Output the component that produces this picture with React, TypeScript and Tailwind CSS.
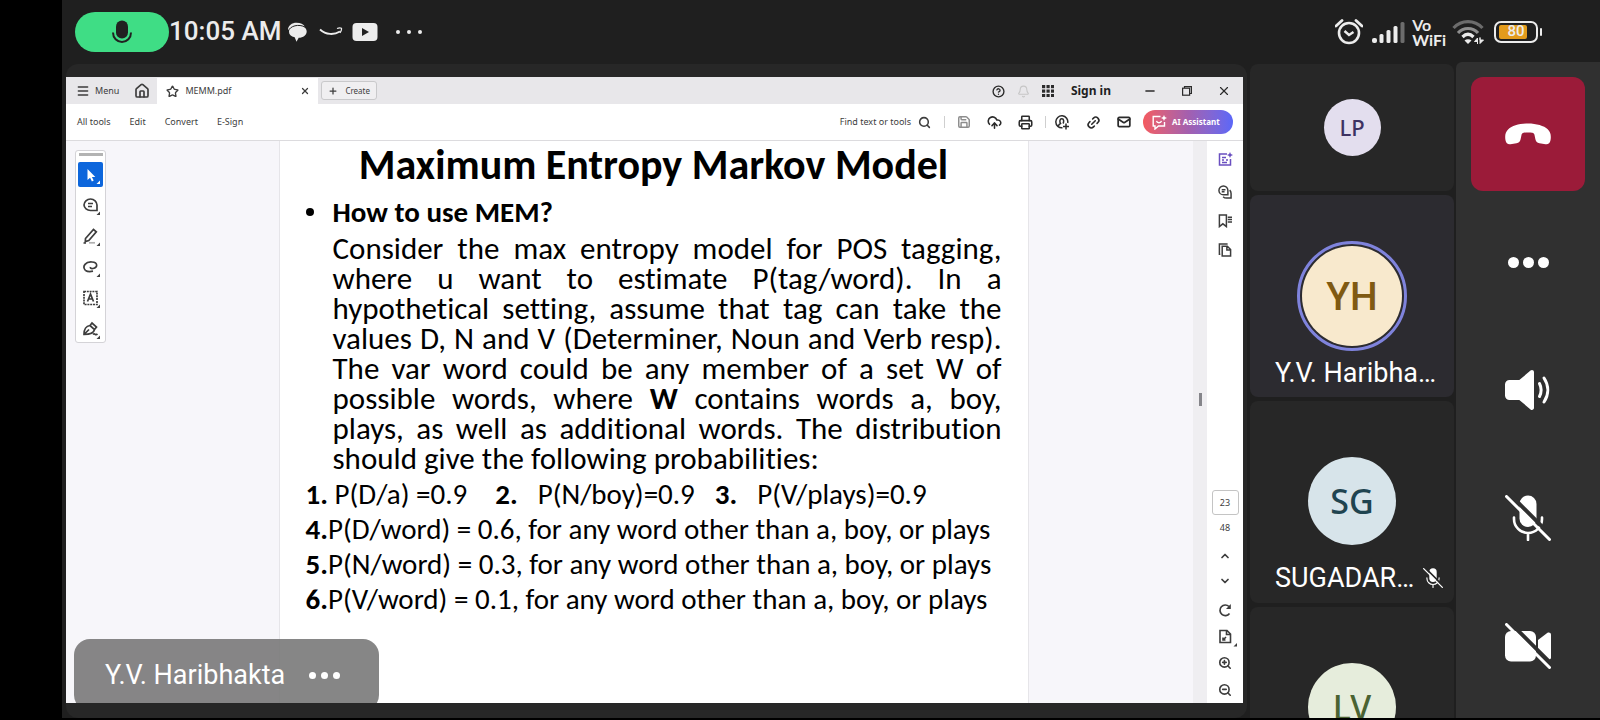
import type { ReactNode } from "react";
import {
  Bell, ChevronDown, ChevronUp, CircleHelp, CloudUpload, House, Link2, Mail,
  Menu, Minus, Plus, Printer, Save, Search, Star, X, ZoomIn, ZoomOut,
} from "lucide-react";

function MicOff({ className, gap }: { className: string; gap: string }) {
  return (
    <svg viewBox="0 0 46 46" className={className} fill="none" aria-hidden="true">
      <rect x="14.5" y="0.5" width="17" height="31.5" rx="8.5" fill="currentColor" />
      <path d="M9 22.500v1.500a14 14 0 0 0 28 0v-1.500M23 38v7" stroke="currentColor" strokeWidth="2.600" strokeLinecap="round" />
      <path d="M4 -1.500L48 42.500" stroke={gap} strokeWidth="4" />
      <path d="M1.500 1.500L44.500 44.500" stroke="currentColor" strokeWidth="3" strokeLinecap="round" />
    </svg>
  );
}

function CameraOff() {
  return (
    <svg viewBox="0 0 46 46" className="size-[46px]" fill="none" aria-hidden="true">
      <rect x="0" y="8" width="31" height="30.500" rx="6" fill="currentColor" />
      <path d="M33 17l9.500-7.200c1.500-1 3.500 0 3.500 1.800v22.800c0 1.800-2 2.800-3.500 1.800L33 29z" fill="currentColor" />
      <path d="M4 -1.500L50 44.500" stroke="#303030" strokeWidth="4" />
      <path d="M1.500 1.500L44.500 44.500" stroke="currentColor" strokeWidth="3" strokeLinecap="round" />
    </svg>
  );
}

function Speaker() {
  return (
    <svg viewBox="0 0 46 46" className="size-[46px]" fill="none" aria-hidden="true">
      <path d="M4.500 13h9.800L25.500 3.600c1.500-1.200 3.500-.3 3.500 1.600v35.600c0 1.900-2 2.800-3.500 1.600L14.300 33H4.500A4.500 4.500 0 0 1 0 28.500v-11A4.500 4.500 0 0 1 4.500 13z" fill="currentColor" />
      <path d="M34.500 16.500c2 4 2 9 0 13M39 11c5 7.500 5 16.500 0 24" stroke="currentColor" strokeWidth="3" strokeLinecap="round" />
    </svg>
  );
}

function HangUp() {
  return (
    <svg viewBox="0 0 46 22" className="h-[22px] w-[46px]" fill="currentColor" aria-hidden="true">
      <path d="M23 .5c8.500 0 16 2.200 19.700 5.800 3 2.900 3.600 6.500 2.800 11-.5 3-2.400 4.300-5 3.900l-6-.9c-2.400-.4-3.600-1.800-4.100-4l-.9-4.300c-.3-1.300-1-2-2.200-2.200-2.800-.5-5.800-.5-8.600 0-1.200.2-1.900.9-2.200 2.200l-.9 4.300c-.5 2.200-1.700 3.600-4.100 4l-6 .9c-2.600.4-4.500-.9-5-3.900-.8-4.500-.2-8.100 2.800-11C7 2.700 14.500.5 23 .5z" />
    </svg>
  );
}

function Dots({ className, r, step }: { className: string; r: number; step: number }) {
  const w = step * 2 + r * 2;
  return (
    <svg viewBox={`0 0 ${w} ${r * 2}`} className={className} fill="currentColor" aria-hidden="true">
      {[0, 1, 2].map((i) => <circle key={i} cx={r + i * step} cy={r} r={r} />)}
    </svg>
  );
}

function StatusBar() {
  return (
    <header className="flex h-[62px] shrink-0 items-center pl-[13px] pr-[58px] pt-px text-[#ececec]">
      <div className="flex h-10 w-[94px] items-center justify-center rounded-full bg-[#3fdd85]">
        <svg viewBox="0 0 20 24" className="h-6 w-5" fill="none" aria-hidden="true">
          <rect x="4" y="0.500" width="12" height="18" rx="6" fill="#212121" />
          <path d="M1 12.500c0 5.500 4 9.500 9 9.500s9-4 9-9.500" stroke="#212121" strokeWidth="2" />
        </svg>
      </div>
      <time className="font-['Roboto',sans-serif] text-[26px] font-medium">10:05 AM</time>
      <svg viewBox="0 0 20 20" className="ml-[6px] size-5" aria-hidden="true">
        <path d="M1 8C1 3.500 5 .8 9.500.8c4 0 7 1.500 8.500 4C14 2.800 5 3 1.500 9z" fill="#ececec" />
        <path d="M11 3.200c5 0 8.700 2.500 8.700 6.300 0 3.500-3.500 6.300-8 6.300l-2.200 4-1.800-4.500C4 14.500 2 12.500 2 9.800 2 5.800 6 3.200 11 3.200z" fill="#ececec" />
        <path d="M1 9.500C3 3.500 12 1.800 18 5" stroke="#212121" strokeWidth="1" fill="none" />
      </svg>
      <svg viewBox="0 0 24 10" className="ml-3 h-[10px] w-6" fill="none" stroke="#ececec" aria-hidden="true">
        <path d="M1 2.500c6 5.500 14 5.500 20 2" strokeWidth="2" />
        <path d="M18 1.500c2-.8 3.500-.8 4.500-.2.300 1.500-.3 3-1.500 4.500" strokeWidth="1.200" />
      </svg>
      <svg viewBox="0 0 26 20" className="ml-[9px] h-5 w-[26px]" aria-hidden="true">
        <rect x="0.500" y="1" width="25" height="18" rx="4" fill="#ececec" />
        <path d="M10 6v8l7-4z" fill="#212121" />
      </svg>
      <Dots className="ml-[18px] h-[4px] w-[26px]" r={2} step={11} />

      <svg viewBox="0 0 28 28" className="ml-auto size-7" fill="none" stroke="#ececec" aria-hidden="true">
        <circle cx="14" cy="15" r="10" strokeWidth="2.600" />
        <path d="M9.500 13l4.500 4 4.500-3" strokeWidth="2.400" />
        <path d="M1 8l6-5.500M27 8l-6-5.500" strokeWidth="2.800" strokeLinecap="round" />
      </svg>
      <svg viewBox="0 0 34 22" className="ml-[9px] h-[22px] w-[34px]" fill="#ececec" aria-hidden="true">
        <rect x="0" y="17" width="5" height="5" rx="2" />
        <rect x="7.500" y="13" width="4" height="9" rx="1.500" />
        <rect x="14.500" y="9" width="4" height="13" rx="1.500" />
        <rect x="21.500" y="5" width="4" height="17" rx="1.500" />
        <rect x="28.500" y="1" width="4" height="21" rx="1.500" fill="#6c6c6c" />
      </svg>
      <div className="ml-[6px] font-['Lato',sans-serif] text-[16px] font-bold leading-[15px]">
        <div>Vo</div>
        <div>WiFi</div>
      </div>
      <svg viewBox="0 0 32 26" className="ml-[6px] h-[26px] w-8" fill="none" aria-hidden="true">
        <path d="M1.500 9c8-8.500 21-8.500 29 0" stroke="#6c6c6c" strokeWidth="3.200" />
        <path d="M6 14c5.500-6 14.500-6 20 0" stroke="#8f8f8f" strokeWidth="3.200" />
        <path d="M10.500 18c3.500-3.500 7.500-3.500 11 0" stroke="#ececec" strokeWidth="3.200" />
        <path d="M12.500 21.500c2-1.800 5-1.800 7 0L16 25z" fill="#ececec" />
        <path d="M25.500 25v-6l-3 3.500h3zM28 18.500v6l3.500-3.500H28z" fill="#ececec" stroke="#ececec" />
      </svg>
      <div className="ml-[10px] flex items-center">
        <div className="relative flex h-[22px] w-11 items-center justify-center rounded-[7px] border-2 border-[#ececec]">
          <div className="absolute inset-y-[2px] left-[3px] w-7 rounded-[2px] bg-[#e39b1c]" />
          <span className="relative font-['Roboto',sans-serif] text-[15px] font-medium leading-none">80</span>
        </div>
        <div className="ml-[2px] h-2 w-[2px] rounded-full bg-[#ececec]" />
      </div>
    </header>
  );
}

function TabBar() {
  return (
    <div className="flex h-[27px] items-stretch bg-[#e8e7ea] pt-px text-[10px] text-[#3d3d3d]">
      <button className="flex items-center gap-[5px] pl-[10px]">
        <Menu className="size-[14px]" strokeWidth={2.500} />
        <span className="text-[9px]">Menu</span>
      </button>
      <button aria-label="Home" className="ml-[15px] mr-[7px] flex items-center"><House className="size-4" strokeWidth={2.500} /></button>
      <div className="flex w-[161px] items-center bg-white pl-[9px] pr-2">
        <Star className="size-[13px]" strokeWidth={2.500} />
        <span className="ml-[6px] text-[9px]">MEMM.pdf</span>
        <button aria-label="Close tab" className="ml-auto"><X className="size-[10px]" strokeWidth={3} /></button>
      </div>
      <button className="mb-1 mt-[3px] ml-[3px] flex items-center gap-[7px] rounded-[3px] border border-[#c9c9cb] bg-[#f0eff1] px-[6px] text-[8px]">
        <Plus className="size-[10px]" strokeWidth={3} />
        Create
      </button>
      <div className="ml-auto flex items-center text-[#2b2b2b]">
        <button aria-label="Help"><CircleHelp className="size-[13px]" strokeWidth={2.500} /></button>
        <button aria-label="Notifications" className="ml-3 text-[#c6c6c6]"><Bell className="size-[13px]" /></button>
        <button aria-label="Apps" className="ml-3">
          <svg viewBox="0 0 12 12" className="size-3" fill="currentColor">
            {[0, 4.500, 9].map((y) => [0, 4.500, 9].map((x) => <rect key={`${x}-${y}`} x={x} y={y} width="3.200" height="3.200" />))}
          </svg>
        </button>
        <button className="ml-[17px] text-[12px] font-bold text-[#1f1f1f]">Sign in</button>
        <button aria-label="Minimize" className="ml-8"><Minus className="size-[14px]" strokeWidth={2.500} /></button>
        <button aria-label="Restore" className="ml-[25px]">
          <svg viewBox="0 0 10 10" className="size-[10px]" fill="none" stroke="currentColor" strokeWidth="1.200">
            <rect x="0.600" y="2.200" width="7" height="7" />
            <path d="M2.500 2V.6h6.900v6.900H8" />
          </svg>
        </button>
        <button aria-label="Close" className="ml-[25px] mr-3"><X className="size-[14px]" strokeWidth={2} /></button>
      </div>
    </div>
  );
}

function ToolBar() {
  return (
    <div className="flex h-[37px] items-center border-b border-[#dcdbde] bg-white pl-[11px] pr-[10px] text-[9px] text-[#3d3d3d]">
      <nav className="flex gap-[19px]">
        <button>All tools</button>
        <button>Edit</button>
        <button>Convert</button>
        <button>E-Sign</button>
      </nav>
      <button className="ml-auto flex items-center gap-[7px]">
        Find text or tools
        <Search className="size-[13px]" strokeWidth={2.800} />
      </button>
      <span className="ml-[13px] h-3 w-px bg-[#cfcfcf]" />
      <div className="ml-3 flex gap-4 text-[#2b2b2b]">
        <button aria-label="Save" className="text-[#8d8d8d]"><Save className="size-[14px]" strokeWidth={2.500} /></button>
        <button aria-label="Upload"><CloudUpload className="size-[15px]" strokeWidth={2.500} /></button>
        <button aria-label="Print"><Printer className="size-[15px]" strokeWidth={2.500} /></button>
      </div>
      <span className="ml-3 h-3 w-px bg-[#cfcfcf]" />
      <div className="ml-[9px] flex gap-4 text-[#2b2b2b]">
        <button aria-label="Add people">
          <svg viewBox="0 0 15 15" className="size-[15px]" fill="none" stroke="currentColor" strokeWidth="1.500">
            <path d="M7.500 12.800A6 6 0 1 1 12.700 8" />
            <path d="M3.500 11c.2-1.500 1-2 2-2.500C4.500 7 4.500 3.800 6.800 3.800S9 7 8 8.500M11 8.500v6M8 11.500h6" />
          </svg>
        </button>
        <button aria-label="Link"><Link2 className="size-[15px] -rotate-45" strokeWidth={2.500} /></button>
        <button aria-label="Mail"><Mail className="size-[14px]" strokeWidth={3} /></button>
      </div>
      <button className="ml-3 flex h-6 w-[90px] items-center gap-[5px] rounded-full bg-linear-to-r from-[#f45a5e] via-[#a45fae] to-[#5b67f8] pl-[9px] text-[9px] font-bold text-white">
        <svg viewBox="0 0 15 15" className="size-[15px]" fill="none" stroke="currentColor" strokeWidth="1.400">
          <path d="M8.500 1.500H1.200V11H3v3l3.500-3h6V7" />
          <path d="M4.500 5.800c.6 2.500 4.400 2.500 5 0" />
          <path d="M12 0l.9 2.100L15 3l-2.100.9L12 6l-.9-2.100L9 3l2.100-.9z" fill="currentColor" stroke="none" />
        </svg>
        <span className="text-[8px]">AI Assistant</span>
      </button>
    </div>
  );
}

function Tool({ label, active, children }: { label: string; active?: boolean; children: ReactNode }) {
  return (
    <button
      aria-label={label}
      className={active ? "flex size-[25px] items-center justify-center rounded-[2px] bg-[#0d66dc] text-white" : "flex size-[25px] items-center justify-center text-[#3d3d3d]"}
    >
      <svg viewBox="0 0 20 20" className="size-5" fill="none" stroke="currentColor" strokeWidth="1.700">
        {children}
        <path d="M19 15.500v3.500h-3.500z" fill="currentColor" stroke="none" />
      </svg>
    </button>
  );
}

function QuickTools() {
  return (
    <div className="ml-[9px] mt-[9px] flex w-[31px] flex-col items-center gap-[6px] self-start rounded-[3px] border border-[#d4d3d7] bg-white pt-[2px]">
      <span className="h-[3px] w-6 bg-[#b3b3b3]" />
      <Tool label="Select" active>
        <path d="M6.500 4v11l2.600-2.300 1.800 3.800 1.800-.9-1.800-3.600h3.400z" fill="currentColor" stroke="none" />
      </Tool>
      <Tool label="Comment">
        <path d="M3 9a6.500 6 0 1 1 13 0v5.500H9.500A6.500 5.800 0 0 1 3 9zM7 7.500h5M7 10.500h4" />
      </Tool>
      <Tool label="Highlight">
        <path d="M4.500 11.500L12.500 2.500l2.800 2.300-7.500 8.800-3.500 1zM2.500 16h2.500" />
        <path d="M8 15.800h6" stroke="#b0b0b0" />
      </Tool>
      <Tool label="Draw">
        <path d="M4.500 12.500C.5 8 5 3.500 11 4c6 .4 6 5.500 1 6.500-2 .4-3-.4-2.500-1.500M4.500 12.500c2 1.200 5 1.200 7.500.7" />
      </Tool>
      <Tool label="Add text">
        <rect x="3" y="2.500" width="13" height="13" strokeDasharray="2 0.800" />
        <path d="M6.500 12.500l3-7.500 3 7.500M7.500 10h4" />
      </Tool>
      <Tool label="Sign">
        <path d="M3 14.500c0-5 2-8.500 6-9l4.500 4c-.6 3-4 5-10.500 5zM9 5.500l2-2.500 4.500 4-2 2.500M3.500 14l4.500-4.500M12 14.500c2-2 2 1.500 4.500-.5" />
      </Tool>
    </div>
  );
}

const paragraph = [
  "Consider the max entropy model for POS tagging,",
  "where u want to estimate P(tag/word). In a",
  "hypothetical setting, assume that tag can take the",
  "values D, N and V (Determiner, Noun and Verb resp).",
  "The var word could be any member of a set W of",
  "possible words, where W contains words a, boy,",
  "plays, as well as additional words. The distribution",
];

const rules = [
  ["4.", "P(D/word) = 0.6, for any word other than a, boy, or plays"],
  ["5.", "P(N/word) = 0.3, for any word other than a, boy, or plays"],
  ["6.", "P(V/word) = 0.1, for any word other than a, boy, or plays"],
];

function ParagraphLine({ text }: { text: string }) {
  const [before, after] = text.split("where W contains");
  return (
    <span className="block whitespace-nowrap [text-align-last:justify]">
      {after === undefined ? text : <>{before}where <b>W</b> contains{after}</>}
    </span>
  );
}

function Slide() {
  return (
    <article className="w-[750px] shrink-0 border-x border-[#e6e5e9] bg-white pl-[26px] pr-[26px] font-['Carlito','Lato',sans-serif] text-black [font-variant-ligatures:none]">
      <h1 className="whitespace-nowrap text-center text-[42px] font-bold leading-[48px]">Maximum Entropy Markov Model</h1>
      <div className="mt-[5px] flex items-center text-[29px] leading-[36px]">
        <span className="mr-[19px] size-2 rounded-full bg-black" />
        <h2 className="font-bold">How to use MEM?</h2>
      </div>
      <p className="ml-[27px] mt-[3px] text-[31px] leading-[30px]">
        {paragraph.map((line) => <ParagraphLine key={line} text={line} />)}
        <span className="block">should give the following probabilities:</span>
      </p>
      <ul className="mt-1 whitespace-nowrap text-[29px] leading-[35px]">
        <li className="flex">
          <span><b>1.</b> P(D/a) =0.9</span>
          <span className="ml-7 flex gap-5"><b>2.</b> P(N/boy)=0.9</span>
          <span className="ml-5 flex gap-5"><b>3.</b> P(V/plays)=0.9</span>
        </li>
        {rules.map(([n, text]) => <li key={n}><b>{n}</b>{text}</li>)}
      </ul>
    </article>
  );
}

function RightRail() {
  return (
    <div className="flex w-9 shrink-0 flex-col items-center justify-between bg-white pb-[6px] pt-[11px] text-[9px] text-[#3d3d3d]">
      <div className="flex flex-col items-center gap-[15px]">
        <button aria-label="AI panel" className="mb-[3px] text-[#6a4fc0]">
          <svg viewBox="0 0 15 15" className="size-[15px]" fill="none" stroke="currentColor" strokeWidth="1.500">
            <path d="M9 2H1.500v11h11V7M4 5.500h4M4 8h2M8 8h2M4 10.500h5" />
            <path d="M12 0l.9 2.100L15 3l-2.100.9L12 6l-.9-2.100L9 3l2.100-.9z" fill="currentColor" stroke="none" />
          </svg>
        </button>
        <button aria-label="Comments">
          <svg viewBox="0 0 15 15" className="size-[14px]" fill="none" stroke="currentColor" strokeWidth="1.600">
            <path d="M1 5.800a4.800 4.800 0 1 1 9.600 0v4.700H5.800A4.800 4.800 0 0 1 1 5.800zM4 5h4M4 7.300h3M12.500 5.500c1 1 1.500 2 1.500 3.500v5H9c-1.500 0-2.500-.5-3.500-1.500" />
          </svg>
        </button>
        <button aria-label="Bookmarks">
          <svg viewBox="0 0 15 15" className="size-[14px]" fill="none" stroke="currentColor" strokeWidth="1.600">
            <path d="M1.500 1h7.500v12.500L5.200 10.500l-3.700 3zM10.500 3.500H15M10.500 6H15M10.500 8.500H15" />
          </svg>
        </button>
        <button aria-label="Pages">
          <svg viewBox="0 0 15 15" className="size-[14px]" fill="none" stroke="currentColor" strokeWidth="1.600">
            <path d="M4.500 3.500h5.500l3.500 3.500v7h-9zM9.500 3.500V7.500h4M2.500 12H1.500V1h8v1" />
          </svg>
        </button>
      </div>
      <div className="flex flex-col items-center">
        <input aria-label="Page number" defaultValue="23" className="h-[25px] w-[27px] rounded-[3px] border border-[#c4c4c4] bg-white text-center" />
        <span className="mt-[7px] leading-3">48</span>
        <button aria-label="Previous page" className="mt-4"><ChevronUp className="size-3" strokeWidth={3.500} /></button>
        <button aria-label="Next page" className="mt-[13px]"><ChevronDown className="size-3" strokeWidth={3.500} /></button>
        <button aria-label="Rotate" className="mt-4">
          <svg viewBox="0 0 14 14" className="size-[14px]" fill="none" stroke="currentColor" strokeWidth="1.700">
            <path d="M11.500 10.500A5.300 5.300 0 1 1 11 3.500" />
            <path d="M12.800 1v5H8z" fill="currentColor" stroke="none" />
          </svg>
        </button>
        <button aria-label="Page display" className="ml-2 mt-3">
          <svg viewBox="0 0 20 18" className="h-[18px] w-5" fill="none" stroke="currentColor" strokeWidth="1.600">
            <path d="M1 1.500h7l3.500 3.500v8.500H1zM7.500 1.500V5.500h4M4 11l3-3M4 8.500V11h2.500" />
            <path d="M18 14v3.500h-3.500z" fill="currentColor" stroke="none" />
          </svg>
        </button>
        <button aria-label="Zoom in" className="mt-[9px]"><ZoomIn className="size-[14px]" strokeWidth={2.800} /></button>
        <button aria-label="Zoom out" className="mt-[13px]"><ZoomOut className="size-[14px]" strokeWidth={2.800} /></button>
      </div>
    </div>
  );
}

function SharedScreen() {
  return (
    <section className="relative flex min-w-0 flex-1 flex-col overflow-hidden bg-[#f7f6fa] font-['Noto_Sans',sans-serif]">
      <TabBar />
      <ToolBar />
      <div className="flex min-h-0 flex-1">
        <div className="flex min-w-0 flex-1">
          <QuickTools />
          <div className="flex min-w-0 flex-1 justify-center pl-[123px] pr-[115px]">
            <Slide />
          </div>
        </div>
        <div className="flex w-[14px] shrink-0 justify-center bg-[#efeef1] pt-[252px]">
          <span className="h-[13px] w-[3px] bg-[#85858a]" />
        </div>
        <RightRail />
      </div>
      <div className="absolute -bottom-2 left-2 flex h-[72px] w-[305px] items-center rounded-2xl bg-[#797979]/90 pl-[31px] font-['Roboto',sans-serif] text-[27px] text-white">
        <span>Y.V. Haribhakta</span>
        <button aria-label="More options" className="ml-auto mr-[39px]"><Dots className="h-[7px] w-[31px]" r={3.5} step={12} /></button>
      </div>
    </section>
  );
}

function Avatar({ initials, className }: { initials: string; className: string }) {
  return <div className={`flex shrink-0 items-center justify-center rounded-full ${className}`}>{initials}</div>;
}

function Participants() {
  return (
    <section className="mt-[2px] flex w-[204px] shrink-0 flex-col gap-1 overflow-hidden font-['Roboto',sans-serif] text-white">
      <div className="flex h-[127px] shrink-0 items-center justify-center rounded-lg bg-[#272727]">
        <Avatar initials="LP" className="size-[57px] bg-[#e3deee] font-['Noto_Sans',sans-serif] text-[22px] font-medium text-[#3d3262]" />
      </div>
      <div className="flex h-[202px] shrink-0 flex-col items-center rounded-lg bg-[#2c2b30] pt-[46px]">
        <div className="rounded-full border-[3px] border-[#7f83dc] p-[2px]">
          <Avatar initials="YH" className="size-[100px] bg-[#f8e9cd] pt-[2px] text-[39px] font-medium text-[#805a12]" />
        </div>
        <span className="mt-1 w-full pl-[25px] text-[27px] leading-9">Y.V. Haribha…</span>
      </div>
      <div className="flex h-[202px] shrink-0 flex-col items-center rounded-lg bg-[#272727] pt-[56px]">
        <Avatar initials="SG" className="size-[88px] bg-[#d7e4ea] font-['Noto_Sans',sans-serif] text-[34px] font-medium text-[#1f4450]" />
        <div className="mt-[15px] flex w-full items-center justify-between pl-[25px] pr-[11px] text-[27px] leading-9">
          <span>SUGADAR…</span>
          <MicOff className="size-5" gap="#272727" />
        </div>
      </div>
      <div className="flex h-[202px] shrink-0 flex-col items-center rounded-lg bg-[#272727] pt-[56px]">
        <Avatar initials="LV" className="size-[88px] bg-[#e6eddc] font-['Noto_Sans',sans-serif] text-[34px] font-medium text-[#4a6332]" />
      </div>
    </section>
  );
}

function Controls() {
  return (
    <nav className="ml-[2px] flex w-[144px] shrink-0 flex-col items-center gap-[14px] overflow-hidden rounded-tl-md bg-[#303030] pt-[15px] text-white">
      <button aria-label="Hang up" className="flex h-[114px] w-[114px] shrink-0 items-center justify-center rounded-xl bg-[#9b1b39]"><HangUp /></button>
      <button aria-label="More" className="flex h-[114px] w-[114px] shrink-0 items-center justify-center"><Dots className="h-[11px] w-[41px]" r={5.5} step={15} /></button>
      <button aria-label="Speaker" className="flex h-[114px] w-[114px] shrink-0 items-center justify-center"><Speaker /></button>
      <button aria-label="Unmute" className="flex h-[114px] w-[114px] shrink-0 items-center justify-center"><MicOff className="size-[46px]" gap="#303030" /></button>
      <button aria-label="Turn camera on" className="flex h-[114px] w-[114px] shrink-0 items-center justify-center"><CameraOff /></button>
    </nav>
  );
}

export default function App() {
  return (
    <div className="h-screen bg-black pb-[2px] pl-[62px]">
      <div className="flex h-full flex-col overflow-hidden bg-[#1f1f1f]">
        <StatusBar />
        <main className="flex min-h-0 flex-1">
          <div className="ml-1 mr-[3px] mt-[2px] flex min-w-0 flex-1 rounded-xl bg-[#272727] pb-[15px] pr-1 pt-[13px]">
            <SharedScreen />
          </div>
          <Participants />
          <Controls />
        </main>
      </div>
    </div>
  );
}
